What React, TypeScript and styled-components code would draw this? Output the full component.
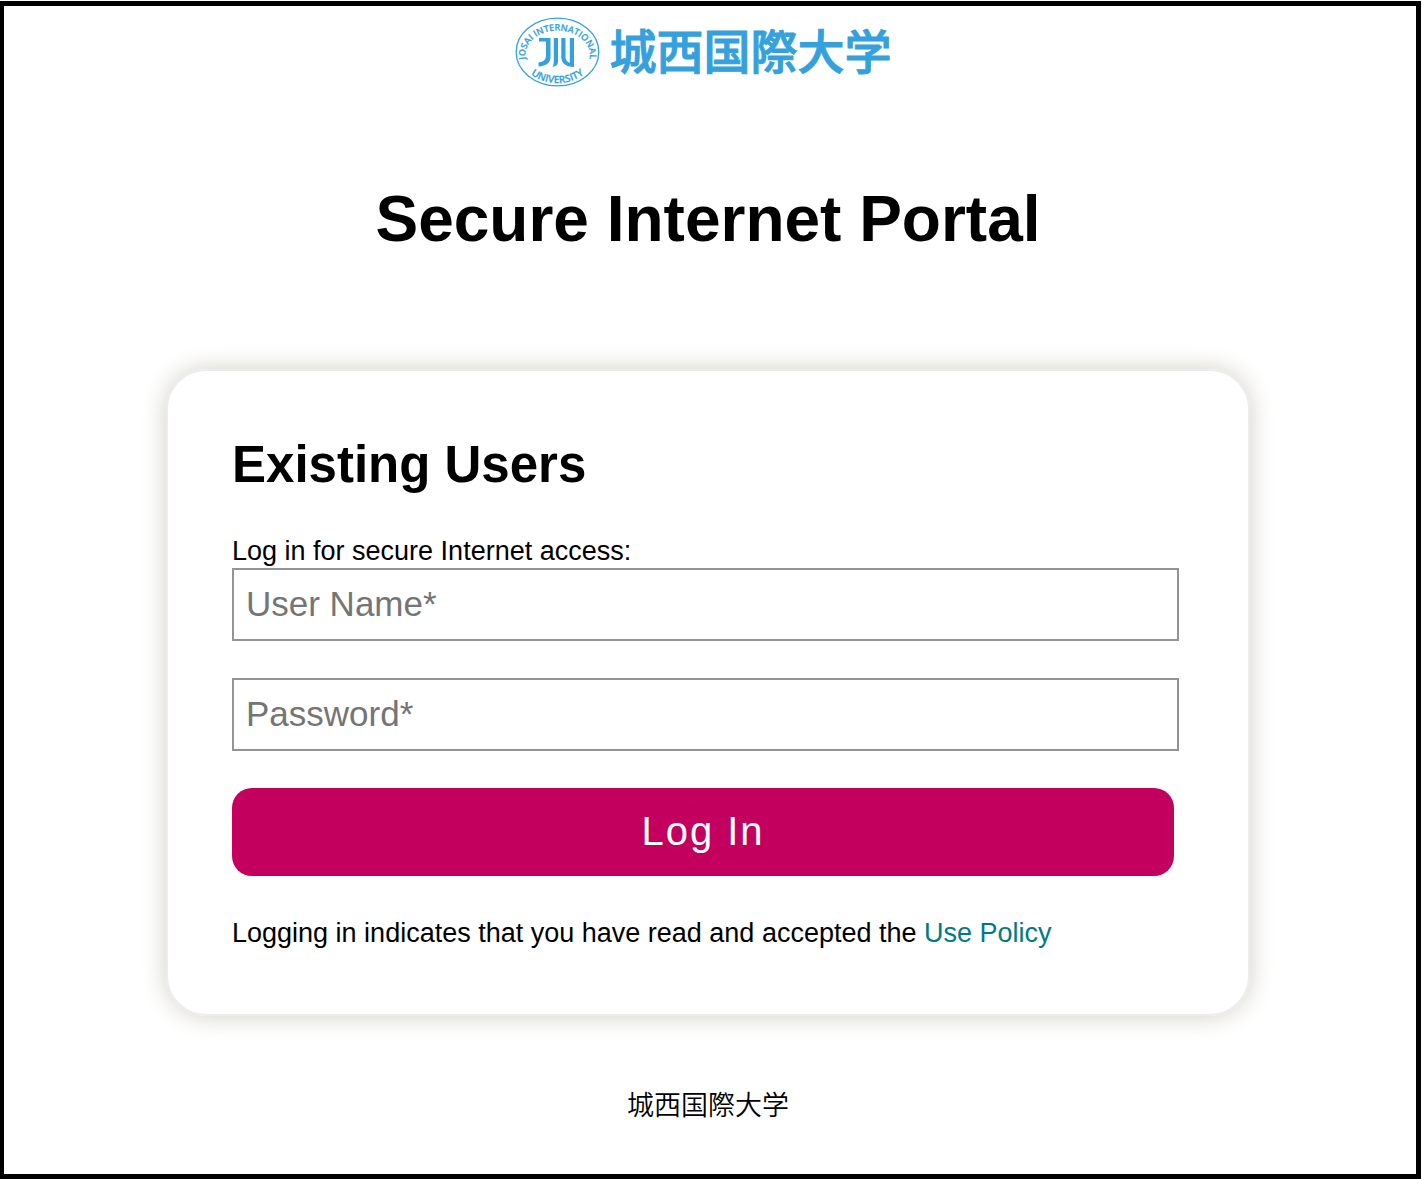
import React from "react";
import styled, { createGlobalStyle } from "styled-components";

const GlobalStyle = createGlobalStyle`
  *, *::before, *::after { box-sizing: border-box; }
  body {
    margin: 0;
    background: #fff;
    color: #000;
    font-family: "Liberation Sans", Arial, "Noto Sans CJK JP", sans-serif;
  }
`;

const Page = styled.div`
  display: flex;
  min-height: 100vh;
  padding: 1px 1px 0 0;
`;

const Frame = styled.div`
  flex: 1;
  display: flex;
  flex-direction: column;
  align-items: center;
  padding: 11px 4px 0 0;
  border: 5px solid #000;
  border-left-width: 4px;
`;

const Brand = styled.header`
  display: flex;
  align-items: flex-start;
  gap: 10px;
  height: 70px;
  padding-right: 10px;
  color: #35a1dc;
`;

const BrandName = styled.span`
  font-family: "Noto Sans CJK JP", sans-serif;
  font-size: 47px;
  font-weight: 500;
  line-height: 64px;
  -webkit-text-stroke: 1px currentColor;
`;

const Title = styled.h1`
  margin: 96px 0 0;
  font-size: 64px;
  line-height: 72px;
  text-align: center;
`;

const Card = styled.main`
  width: 100%;
  max-width: 1084px;
  margin-top: 114px;
  padding: 64px 69px 64px 64px;
  border: 2px solid #ececec;
  border-radius: 40px;
  box-shadow: 0 0 24px #d0cec4;
`;

const CardTitle = styled.h2`
  margin: 0 0 40px;
  font-size: 51px;
  line-height: 60px;
`;

const Form = styled.form`
  display: flex;
  flex-direction: column;
`;

const Text = styled.p`
  margin: 0;
  font-size: 27px;
  line-height: 33px;
`;

const Field = styled.input`
  width: 100%;
  height: 73px;
  margin-bottom: 37px;
  padding: 0 12px 2px;
  border: 2px solid #949494;
  border-radius: 0;
  background: #fff;
  font-family: inherit;
  font-size: 35px;
  &::placeholder { color: #757575; opacity: 1; }
`;

const LoginButton = styled.button`
  height: 88px;
  margin: 0 5px 41px 0;
  padding: 0 0 2px;
  border: 0;
  border-radius: 20px;
  background: #c3005e;
  color: #fff;
  font-family: inherit;
  font-size: 40px;
  letter-spacing: 2px;
  cursor: pointer;
`;

const PolicyLink = styled.a`
  color: #007a87;
  text-decoration: none;
`;

const Footer = styled.footer`
  margin-top: 68px;
  font-family: "Noto Sans CJK JP", sans-serif;
  font-size: 27px;
  font-weight: 350;
  line-height: 40px;
`;

const Emblem = () => (
  <svg width="85" height="70" viewBox="0 0 85 70" role="img" aria-label="Josai International University">
    <defs>
      <path id="arc-top" d="M10.7 43 A32.3 25 0 1 1 74.3 43" />
      <path id="arc-bottom" d="M9 50 A39 33 0 0 0 76 50" />
    </defs>
    <ellipse cx="42.5" cy="35" rx="41.3" ry="33.8" fill="none" stroke="currentColor" strokeWidth="1.3" />
    <g fill="currentColor" stroke="currentColor" strokeWidth="0.25" fontFamily="Open Sans, sans-serif" fontWeight="600">
      <text textAnchor="middle" fontSize="9">
        <textPath href="#arc-top" startOffset="50%">JOSAI INTERNATIONAL</textPath>
      </text>
      <text textAnchor="middle" fontSize="10">
        <textPath href="#arc-bottom" startOffset="50%">UNIVERSITY</textPath>
      </text>
    </g>
    <g fill="currentColor">
      <path d="M24 21H35.5V40Q35.5 48.5 23.5 49.5V45.5Q31 44.5 31 39V24.5H24Z" />
      <path d="M38.8 21H43V45Q43 49 37.5 50Q38.8 48 38.8 45Z" />
      <path d="M46.3 21H50.5V40Q50.5 44.5 54.8 45.7V21H59V50Q46.3 49.5 46.3 40Z" />
    </g>
  </svg>
);

export default function App() {
  return (
    <>
      <GlobalStyle />
      <Page>
        <Frame>
          <Brand>
            <Emblem />
            <BrandName lang="ja">城西国際大学</BrandName>
          </Brand>
          <Title>Secure Internet Portal</Title>
          <Card>
            <CardTitle>Existing Users</CardTitle>
            <Form onSubmit={(e) => e.preventDefault()}>
              <Text>Log in for secure Internet access:</Text>
              <Field type="text" name="username" aria-label="User Name" placeholder="User Name*" />
              <Field type="password" name="password" aria-label="Password" placeholder="Password*" />
              <LoginButton type="submit">Log In</LoginButton>
              <Text>
                Logging in indicates that you have read and accepted the{" "}
                <PolicyLink href="#policy">Use Policy</PolicyLink>
              </Text>
            </Form>
          </Card>
          <Footer lang="ja">城西国際大学</Footer>
        </Frame>
      </Page>
    </>
  );
}
